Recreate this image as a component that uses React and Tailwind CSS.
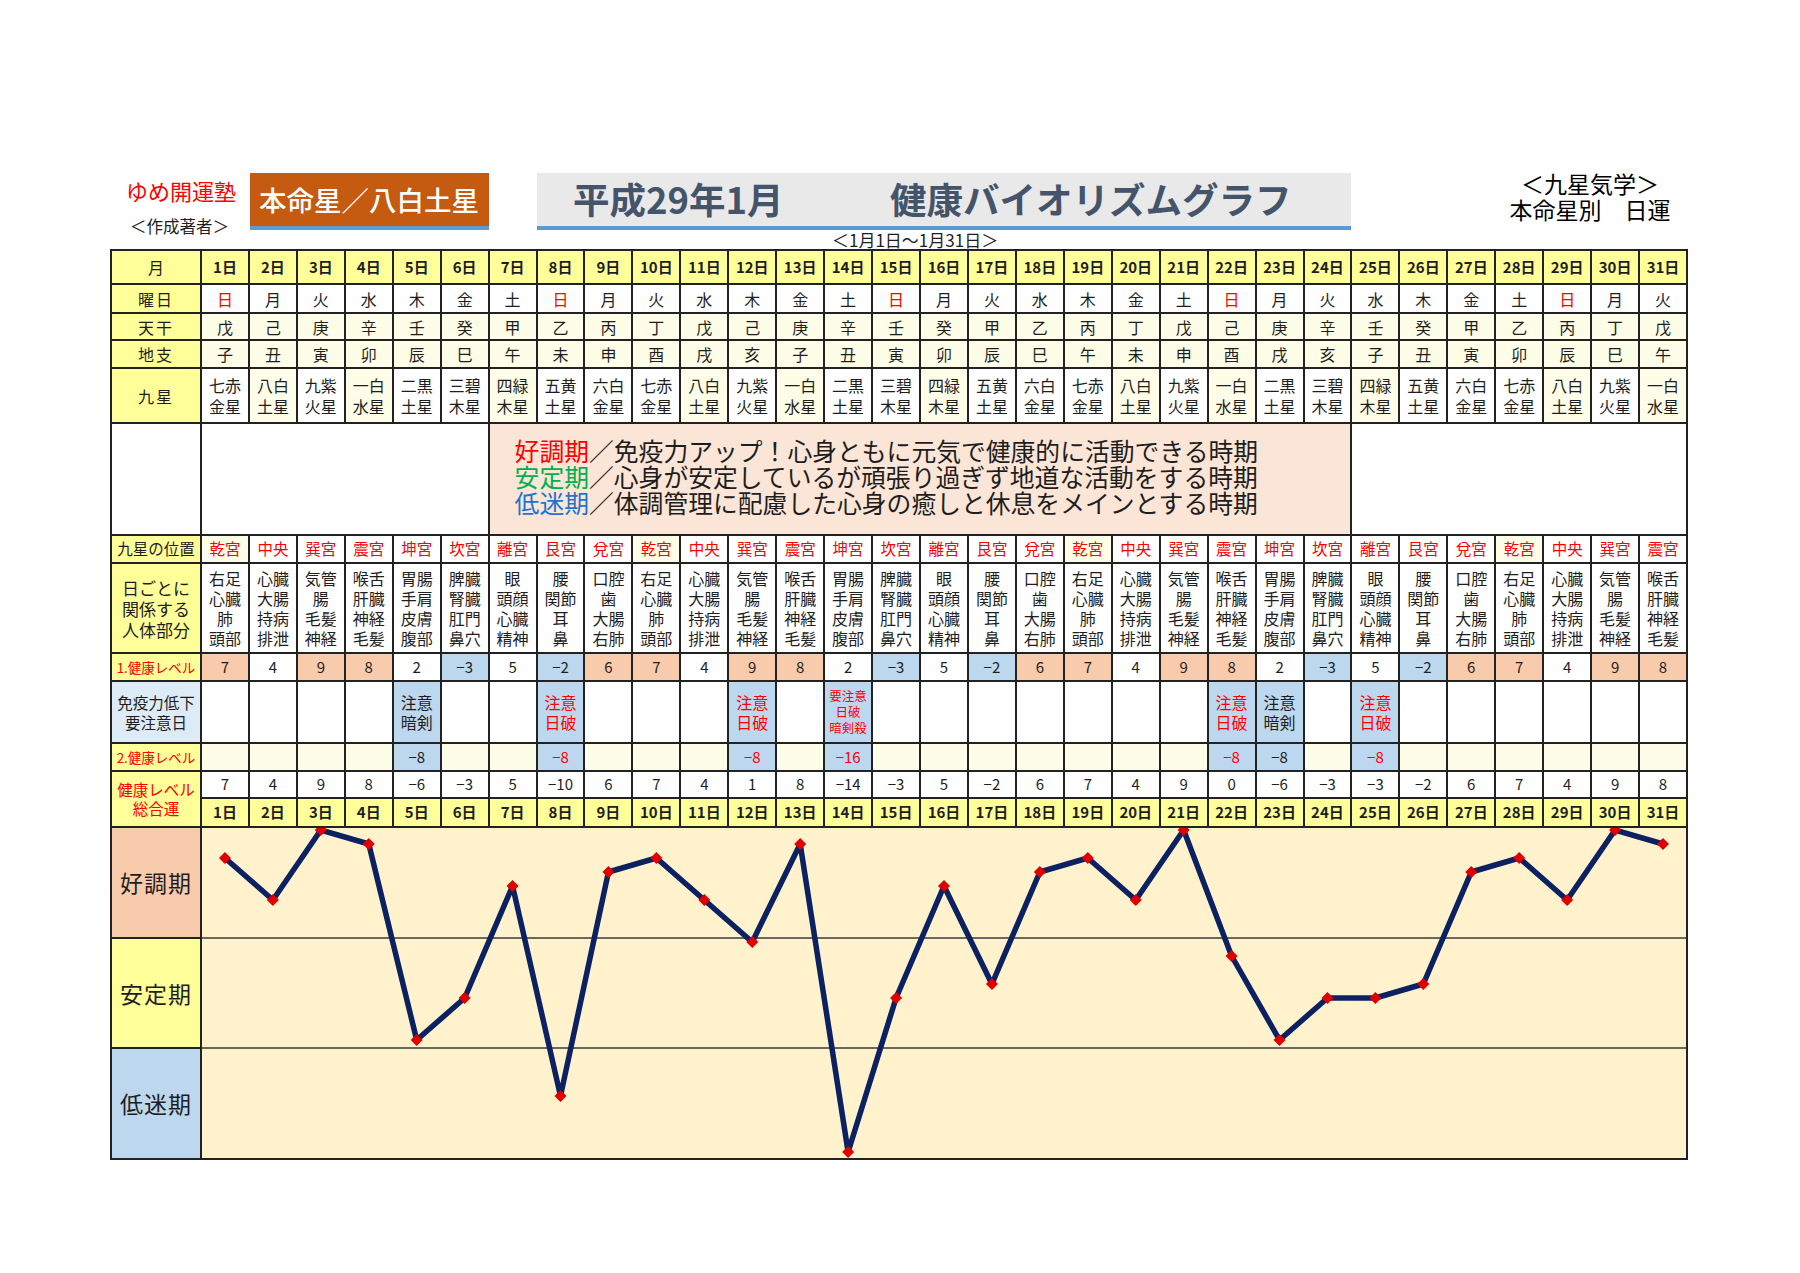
import React from 'react'

// 平成29年1月 健康バイオリズムグラフ (本命星 八白土星)
const WEEK = ['日', '月', '火', '水', '木', '金', '土']
const STEMS = ['甲', '乙', '丙', '丁', '戊', '己', '庚', '辛', '壬', '癸']
const BRANCHES = ['子', '丑', '寅', '卯', '辰', '巳', '午', '未', '申', '酉', '戌', '亥']
const STARS = ['一白水星', '二黒土星', '三碧木星', '四緑木星', '五黄土星', '六白金星', '七赤金星', '八白土星', '九紫火星']
const PALACES = ['乾宮', '中央', '巽宮', '震宮', '坤宮', '坎宮', '離宮', '艮宮', '兌宮']
const BODY = {
  乾宮: ['右足', '心臓', '肺', '頭部'],
  中央: ['心臓', '大腸', '持病', '排泄'],
  巽宮: ['気管', '腸', '毛髪', '神経'],
  震宮: ['喉舌', '肝臓', '神経', '毛髪'],
  坤宮: ['胃腸', '手肩', '皮膚', '腹部'],
  坎宮: ['脾臓', '腎臓', '肛門', '鼻穴'],
  離宮: ['眼', '頭顔', '心臓', '精神'],
  艮宮: ['腰', '関節', '耳', '鼻'],
  兌宮: ['口腔', '歯', '大腸', '右肺'],
}
const LEVEL1 = [7, 4, 9, 8, 2, -3, 5, -2, 6, 7, 4, 9, 8, 2, -3, 5, -2, 6, 7, 4, 9, 8, 2, -3, 5, -2, 6, 7, 4, 9, 8]
const WARN = {
  5: { lines: ['注意', '暗剣'], red: false, v: -8 },
  8: { lines: ['注意', '日破'], red: true, v: -8 },
  12: { lines: ['注意', '日破'], red: true, v: -8 },
  14: { lines: ['要注意', '日破', '暗剣殺'], red: true, v: -16, small: true },
  22: { lines: ['注意', '日破'], red: true, v: -8 },
  23: { lines: ['注意', '暗剣'], red: false, v: -8 },
  25: { lines: ['注意', '日破'], red: true, v: -8 },
}

const days = Array.from({ length: 31 }, (_, i) => {
  const d = i + 1
  const palace = PALACES[i % 9]
  const star = STARS[(i + 6) % 9]
  const warn = WARN[d]
  return {
    d,
    week: WEEK[i % 7],
    stem: STEMS[(i + 4) % 10],
    branch: BRANCHES[i % 12],
    star,
    palace,
    body: BODY[palace],
    lv1: LEVEL1[i],
    warn,
    total: LEVEL1[i] + (warn ? warn.v : 0),
  }
})

const CREAM_STARS = ['一白水星', '四緑木星', '八白土星']

function Cell({ className = '', children }) {
  return (
    <div className={'flex items-center justify-center text-center ' + className}>
      {children}
    </div>
  )
}

function levelBg(v) {
  if (v >= 6) return 'bg-[#f8cbad]'
  if (v <= -2) return 'bg-[#bdd7ee]'
  return 'bg-white'
}

const minus = v => String(v).replace('-', '−')

function Chart() {
  // chart cell is 1484 x 330 px
  const colW = 47.935
  const pts = days.map((x, i) => [i * colW + 22.97, 2 + (9 - x.total) * 14.0])
  return (
    <svg className="absolute inset-0 w-full h-full" viewBox="0 0 1484 330">
      <line x1="0" y1="110" x2="1484" y2="110" stroke="#3a3a3a" strokeWidth="1.5" />
      <line x1="0" y1="220" x2="1484" y2="220" stroke="#3a3a3a" strokeWidth="1.5" />
      <polyline
        points={pts.map(p => p.join(',')).join(' ')}
        fill="none"
        stroke="#0b2162"
        strokeWidth="5.5"
        strokeLinejoin="round"
      />
      {pts.map(([x, y], i) => (
        <polygon key={i} points={`${x},${y - 6} ${x + 6},${y} ${x},${y + 6} ${x - 6},${y}`} fill="#e00000" />
      ))}
    </svg>
  )
}

export default function App() {
  return (
    <div className="w-[1800px] h-[1273px] bg-white text-[#1e1e1e] font-['Noto_Sans_CJK_JP','Noto_Sans',sans-serif] overflow-hidden">
      <div className="pt-[173px] pl-[110px]">
        {/* header */}
        <div className="flex h-[57px]">
          <div className="w-[140px] flex flex-col">
            <div className="pl-[16px] mt-[4px] text-[22px] leading-[26px] text-[#ff0000]">ゆめ開運塾</div>
            <div className="pl-[20px] mt-[13px] text-[16.5px] leading-[20px]">＜作成著者＞</div>
          </div>
          <div className="w-[239px] bg-[#c55a11] border-b-[4px] border-[#5b9bd5] flex items-center pl-[9px] text-white text-[27.5px] font-medium leading-none">
            本命星／八白土星
          </div>
          <div className="w-[48px]" />
          <div className="w-[814px] bg-[#e9e9e9] border-b-[4px] border-[#5b9bd5] flex items-center pl-[36px] text-[#44546a] text-[36.5px] font-bold leading-none">
            <span className="w-[317px]">平成29年1月</span>
            <span>健康バイオリズムグラフ</span>
          </div>
          <div className="w-[335px] pl-[143px] flex flex-col items-center text-[23px] leading-[26px] text-black">
            <div className="-mt-[3px]">＜九星気学＞</div>
            <div>本命星別　日運</div>
          </div>
        </div>
        <div className="h-[19px] pl-[722px] text-[17px] leading-[19px]">＜1月1日～1月31日＞</div>

        {/* table */}
        <div className="w-[1578px] p-[2px] gap-[2px] bg-[#222] grid grid-cols-[88px_repeat(31,minmax(0,1fr))] grid-rows-[32px_27px_25px_26px_53px_110px_26px_88px_26px_60px_26px_25px_27px_109px_108px_109px]">
          {/* 月 */}
          <Cell className="bg-[#ffff99] text-[16px]">月</Cell>
          {days.map(x => (
            <Cell key={'h' + x.d} className="bg-[#ffff99] text-[15px] font-bold">{x.d}日</Cell>
          ))}

          {/* 曜日 */}
          <Cell className="bg-[#ffff99] text-[16px] tracking-[2px]">曜日</Cell>
          {days.map(x => (
            <Cell key={'w' + x.d} className={'bg-white text-[16px] ' + (x.week === '日' ? 'text-[#ff0000]' : '')}>{x.week}</Cell>
          ))}

          {/* 天干 */}
          <Cell className="bg-[#ffff99] text-[16px] tracking-[2px]">天干</Cell>
          {days.map(x => (
            <Cell key={'s' + x.d} className="bg-[#fefee8] text-[16px]">{x.stem}</Cell>
          ))}

          {/* 地支 */}
          <Cell className="bg-[#ffff99] text-[16px] tracking-[2px]">地支</Cell>
          {days.map(x => (
            <Cell key={'b' + x.d} className="bg-[#fefee8] text-[16px]">{x.branch}</Cell>
          ))}

          {/* 九星 */}
          <Cell className="bg-[#ffff99] text-[16px] tracking-[2px]">九星</Cell>
          {days.map(x => (
            <Cell
              key={'k' + x.d}
              className={'flex-col text-[16px] leading-[21px] ' + (CREAM_STARS.includes(x.star) ? 'bg-[#fefee8]' : 'bg-white')}
            >
              <span>{x.star.slice(0, 2)}</span>
              <span>{x.star.slice(2)}</span>
            </Cell>
          ))}

          {/* legend */}
          <div className="bg-white" />
          <div className="col-span-6 bg-white" />
          <div className="col-span-18 bg-[#fbe5d6] flex flex-col justify-center pl-[25px] pb-[6px] text-[24.8px] leading-[26px] whitespace-nowrap">
            <div className="h-[26px]"><span className="text-[#ff0000]">好調期</span>／免疫力アップ！心身ともに元気で健康的に活動できる時期</div>
            <div className="h-[26px]"><span className="text-[#00b050]">安定期</span>／心身が安定しているが頑張り過ぎず地道な活動をする時期</div>
            <div className="h-[26px]"><span className="text-[#1f74cc]">低迷期</span>／体調管理に配慮した心身の癒しと休息をメインとする時期</div>
          </div>
          <div className="col-span-7 bg-white" />

          {/* 九星の位置 */}
          <Cell className="bg-[#ffff99] text-[15.5px] whitespace-nowrap">九星の位置</Cell>
          {days.map(x => (
            <Cell key={'p' + x.d} className={'text-[15.5px] text-[#ff0000] ' + (x.palace === '乾宮' ? 'bg-[#fefee8]' : 'bg-white')}>
              {x.palace}
            </Cell>
          ))}

          {/* 人体部分 */}
          <Cell className="bg-[#ffff99] flex-col text-[17px] leading-[21px]">
            <span>日ごとに</span>
            <span>関係する</span>
            <span>人体部分</span>
          </Cell>
          {days.map(x => (
            <Cell key={'t' + x.d} className="bg-white flex-col text-[16px] leading-[20px]">
              {x.body.map(b => <span key={b}>{b}</span>)}
            </Cell>
          ))}

          {/* 1.健康レベル */}
          <Cell className="bg-[#ffff99] text-[13.5px] text-[#ff0000] whitespace-nowrap">1.健康レベル</Cell>
          {days.map(x => (
            <Cell key={'l' + x.d} className={'text-[15px] ' + levelBg(x.lv1)}>{minus(x.lv1)}</Cell>
          ))}

          {/* 免疫力低下 */}
          <Cell className="bg-[#ddebf7] flex-col text-[15.5px] leading-[20px] whitespace-nowrap">
            <span>免疫力低下</span>
            <span>要注意日</span>
          </Cell>
          {days.map(x => (
            <Cell
              key={'m' + x.d}
              className={
                'flex-col ' +
                (x.warn ? 'bg-[#bdd7ee] ' : 'bg-white ') +
                (x.warn && x.warn.red ? 'text-[#ff0000] ' : '') +
                (x.warn && x.warn.small ? 'text-[12.5px] leading-[16px]' : 'text-[16px] leading-[20px]')
              }
            >
              {x.warn && x.warn.lines.map(l => <span key={l}>{l}</span>)}
            </Cell>
          ))}

          {/* 2.健康レベル */}
          <Cell className="bg-[#ffff99] text-[13.5px] text-[#ff0000] whitespace-nowrap">2.健康レベル</Cell>
          {days.map(x => (
            <Cell
              key={'n' + x.d}
              className={'text-[15px] ' + (x.warn ? 'bg-[#bdd7ee] ' : 'bg-[#fefee8] ') + (x.warn && x.warn.red ? 'text-[#ff0000]' : '')}
            >
              {x.warn ? minus(x.warn.v) : ''}
            </Cell>
          ))}

          {/* 総合運 */}
          <Cell className="row-span-2 bg-[#ffff99] flex-col text-[15.5px] leading-[19px] text-[#ff0000]">
            <span>健康レベル</span>
            <span>総合運</span>
          </Cell>
          {days.map(x => (
            <Cell key={'g' + x.d} className="bg-white text-[15px]">{minus(x.total)}</Cell>
          ))}
          {days.map(x => (
            <Cell key={'f' + x.d} className="bg-[#ffff99] text-[15px] font-bold">{x.d}日</Cell>
          ))}

          {/* chart */}
          <Cell className="bg-[#f8cbad] text-[23px] tracking-[1px]">好調期</Cell>
          <div className="col-span-31 row-span-3 bg-[#fff2cc] relative overflow-hidden">
            <Chart />
          </div>
          <Cell className="bg-[#ffff99] text-[23px] tracking-[1px]">安定期</Cell>
          <Cell className="bg-[#bdd7ee] text-[23px] tracking-[1px]">低迷期</Cell>
        </div>
      </div>
    </div>
  )
}
